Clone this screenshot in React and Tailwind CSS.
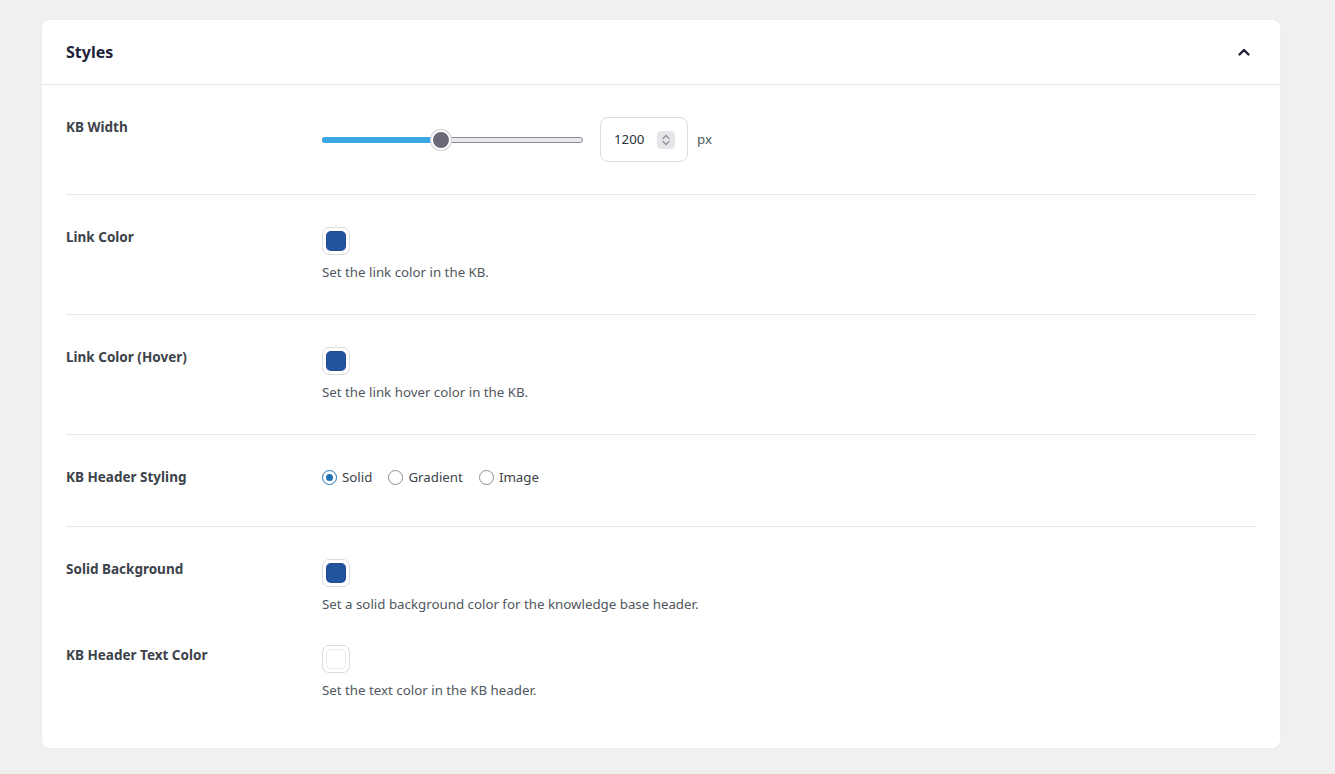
import React, { useState } from 'react';

const Swatch = ({ color }) => (
    <div className="w-[28px] h-[28px] rounded-[7px] border border-[#dcdcde] bg-white p-[3px]">
        <div className="w-full h-full rounded-[5px] shadow-[inset_0_0_0_1px_rgba(0,0,0,0.08)]" style={{ backgroundColor: color }} />
    </div>
);

const Label = ({ children }) => (
    <div className="w-[256px] shrink-0 text-[13.5px] leading-[20px] font-bold text-[#3c434a]">{children}</div>
);

const Row = ({ label, children }) => (
    <div className="flex py-8 border-b border-[#e6e6ef]">
        <Label>{label}</Label>
        <div className="flex-1">{children}</div>
    </div>
);

const Desc = ({ children }) => (
    <p className="mt-[7px] text-[13.3px] leading-[20px] text-[#50575e]">{children}</p>
);

const Radio = ({ label, checked, onChange }) => (
    <label className="flex items-center gap-[5px] cursor-pointer" onClick={onChange}>
        <span className={`w-[15px] h-[15px] rounded-full border flex items-center justify-center ${checked ? 'border-[#2271b1]' : 'border-[#8c8f94]'}`}>
            {checked && <span className="w-[7px] h-[7px] rounded-full bg-[#2271b1]" />}
        </span>
        <span className="text-[13.3px] leading-[20px] text-[#3c434a]">{label}</span>
    </label>
);

const App = () => {
    const [headerStyle, setHeaderStyle] = useState('solid');
    const width = 1200;
    const pct = 45.5;

    return (
        <div className="min-h-screen bg-[#f0f0f1] pt-5 pl-[42px] pr-[55px]" style={{ fontFamily: '"Noto Sans", "Open Sans", sans-serif' }}>
            <div className="bg-white rounded-lg shadow-[0_0_0_1px_#ececf0]">
                <div className="flex items-center justify-between h-[65px] pl-6 pr-[30px] border-b border-[#e6e6ef]">
                    <h2 className="text-[16px] font-bold text-[#1e1f3b]">Styles</h2>
                    <svg width="12" height="8" viewBox="0 0 12 8" fill="none" stroke="#1e1f3b" strokeWidth="2.4" strokeLinecap="round" strokeLinejoin="round">
                        <path d="M1.5 6.5L6 2l4.5 4.5" />
                    </svg>
                </div>

                <div className="px-6 pb-4">
                    <Row label="KB Width">
                        <div className="flex items-center h-[45px]">
                            <div className="relative w-[261px] h-[6px]">
                                <div className="absolute inset-0 rounded-full bg-[#e8e8ee] border border-[#8b8b99]" />
                                <div className="absolute left-0 top-0 h-full rounded-l-full bg-[#3ba7e2]" style={{ width: `${pct}%` }} />
                                <div className="absolute top-1/2 -translate-y-1/2 -translate-x-1/2 w-[20px] h-[20px] rounded-full bg-[#696978] border-2 border-white shadow-[0_0_0_1px_#d0d0d8]" style={{ left: `${pct}%` }} />
                            </div>
                            <div className="ml-[17px] flex items-center w-[88px] h-[45px] rounded-lg border border-[#dcdcde] pl-[13px] pr-3">
                                <span className="text-[13.3px] text-[#2c3338] flex-1">{width}</span>
                                <span className="w-[18px] h-[18px] bg-[#e6e6ea] rounded-sm flex items-center justify-center">
                                    <svg width="10" height="14" viewBox="0 0 10 14" fill="none" stroke="#8c8f94" strokeWidth="1.2" strokeLinecap="round" strokeLinejoin="round">
                                        <path d="M2 5.5l3-3 3 3M2 8.5l3 3 3-3" />
                                    </svg>
                                </span>
                            </div>
                            <span className="ml-[9px] text-[13.3px] text-[#50575e]">px</span>
                        </div>
                    </Row>

                    <Row label="Link Color">
                        <Swatch color="#22539e" />
                        <Desc>Set the link color in the KB.</Desc>
                    </Row>

                    <Row label="Link Color (Hover)">
                        <Swatch color="#22539e" />
                        <Desc>Set the link hover color in the KB.</Desc>
                    </Row>

                    <Row label="KB Header Styling">
                        <div className="flex items-start gap-4 h-[27px]">
                            <Radio label="Solid" checked={headerStyle === 'solid'} onChange={() => setHeaderStyle('solid')} />
                            <Radio label="Gradient" checked={headerStyle === 'gradient'} onChange={() => setHeaderStyle('gradient')} />
                            <Radio label="Image" checked={headerStyle === 'image'} onChange={() => setHeaderStyle('image')} />
                        </div>
                    </Row>

                    <div className="flex flex-col gap-[31px] py-8">
                        <div className="flex">
                            <Label>Solid Background</Label>
                            <div className="flex-1">
                                <Swatch color="#22539e" />
                                <Desc>Set a solid background color for the knowledge base header.</Desc>
                            </div>
                        </div>
                        <div className="flex">
                            <Label>KB Header Text Color</Label>
                            <div className="flex-1">
                                <Swatch color="#ffffff" />
                                <Desc>Set the text color in the KB header.</Desc>
                            </div>
                        </div>
                    </div>
                </div>
            </div>
        </div>
    );
};

export default App;
